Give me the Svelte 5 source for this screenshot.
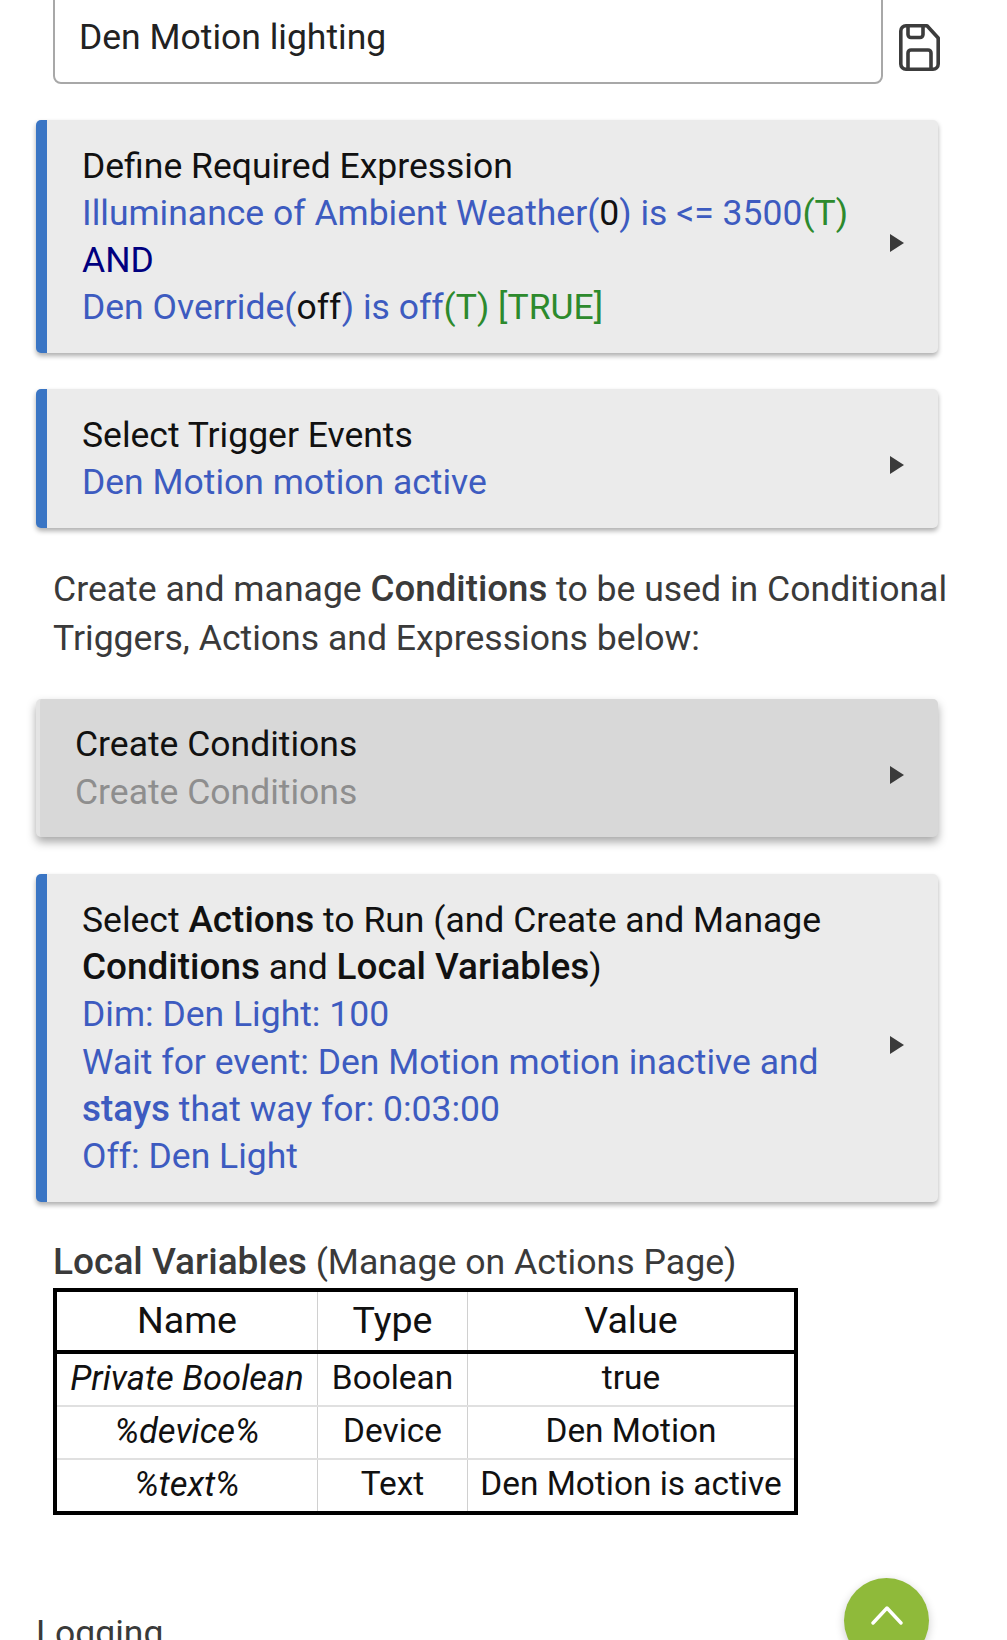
<script>
  const rows = [
    ['Private Boolean', 'Boolean', 'true'],
    ['%device%', 'Device', 'Den Motion'],
    ['%text%', 'Text', 'Den Motion is active']
  ];
</script>

<div class="page">
  <div class="name-row">
    <div class="name-input">Den Motion lighting</div>
    <svg class="save" viewBox="0 0 41 47" width="41" height="47" fill="none" stroke="#3c3c3c" stroke-width="3.6" stroke-linejoin="round">
      <path d="M7 1.8H28L39.2 14V40a5.2 5.2 0 0 1-5.2 5.2H7A5.2 5.2 0 0 1 1.800 40V7A5.2 5.2 0 0 1 7 1.8Z" />
      <path d="M9 1.800V10.500a3 3 0 0 0 3 3H21a3 3 0 0 0 3-3V1.800" />
      <path d="M9 45.200V29a3 3 0 0 1 3-3H29a3 3 0 0 1 3 3V45.200" />
    </svg>
  </div>

  <section class="card first">
    <div class="body">
      <div class="title">Define Required Expression</div>
      <div class="blue">Illuminance of Ambient Weather(<span class="black">0</span>) is &lt;= 3500<span class="green">(T)</span></div>
      <div class="navy">AND</div>
      <div class="blue">Den Override(<span class="black">off</span>) is off<span class="green">(T) [TRUE]</span></div>
    </div>
    <span class="arrow"></span>
  </section>

  <section class="card">
    <div class="body">
      <div class="title">Select Trigger Events</div>
      <div class="blue">Den Motion motion active</div>
    </div>
    <span class="arrow"></span>
  </section>

  <p class="intro">Create and manage <b>Conditions</b> to be used in Conditional Triggers, Actions and Expressions below:</p>

  <section class="card muted">
    <div class="body">
      <div class="title">Create Conditions</div>
      <div class="grey">Create Conditions</div>
    </div>
    <span class="arrow"></span>
  </section>

  <section class="card last">
    <div class="body">
      <div class="title">Select <b>Actions</b> to Run (and Create and Manage <b>Conditions</b> and <b>Local Variables</b>)</div>
      <div class="blue">Dim: Den Light: 100</div>
      <div class="blue">Wait for event: Den Motion motion inactive and <b>stays</b> that way for: 0:03:00</div>
      <div class="blue">Off: Den Light</div>
    </div>
    <span class="arrow"></span>
  </section>

  <div class="vars-title"><b>Local Variables</b> (Manage on Actions Page)</div>
  <table>
    <thead>
      <tr><th class="c1">Name</th><th class="c2">Type</th><th class="c3">Value</th></tr>
    </thead>
    <tbody>
      {#each rows as r}
        <tr><td class="c1 it">{r[0]}</td><td class="c2">{r[1]}</td><td class="c3">{r[2]}</td></tr>
      {/each}
    </tbody>
  </table>

  <div class="logging">Logging</div>

  <button class="top" aria-label="Back to top">
    <svg viewBox="0 0 32 20" width="32" height="20" fill="none" stroke="#fff" stroke-width="3.4" stroke-linecap="round" stroke-linejoin="round"><path d="M2 18 16 3 30 18" /></svg>
  </button>
</div>

<style>
  :global(body) { margin: 0; background: #fff; }
  .page {
    position: relative;
    width: 1007px;
    height: 1640px;
    overflow: hidden;
    font-family: Roboto, "Liberation Sans", sans-serif;
    font-size: 35.5px;
    line-height: 47.3px;
    color: #3a3a3a;
  }
  b { font-weight: 500; font-size: 1.04em; line-height: 1; }
  .name-row { display: flex; align-items: flex-end; margin: -20px 0 0 53px; height: 104px; }
  .name-input {
    box-sizing: border-box;
    width: 830px;
    height: 104px;
    border: 2px solid #a8a8a8;
    border-radius: 8px;
    padding: 32px 24px 0;
    color: #222;
  }
  .save { margin: 0 0 13px 16px; }
  .card {
    box-sizing: border-box;
    display: flex;
    align-items: center;
    width: 902px;
    margin: 36px 0 0 36px;
    padding: 22.500px 32px 21.500px 35px;
    background: #ebebeb;
    border-left: 11px solid #3a75c4;
    border-radius: 5px;
    box-shadow: 0 3px 5px rgba(0,0,0,.32);
    color: #111;
  }
  .card.last { margin-top: 37px; }
  .body { flex: 1; min-width: 0; padding-right: 36px; }
  .title { color: #111; }
  .title b { color: #111; }
  .blue { color: #3d5bc0; }
  .blue b { color: #3d5bc0; }
  .black { color: #111; }
  .green { color: #2d8a2d; }
  .navy { color: #00007f; }
  .grey { color: #8e8e8e; }
  .arrow {
    flex: none;
    width: 0; height: 0;
    margin: 12px 2px 0 0;
    border-left: 14px solid #3a3a3a;
    border-top: 9px solid transparent;
    border-bottom: 9px solid transparent;
  }
  .muted {
    background: #d8d8d8;
    border-left: 4px solid #e4e4e4;
    padding-left: 35px;
    box-shadow: 0 5px 10px rgba(0,0,0,.35);
  }
  .intro { margin: 37px 40px 0 53px; line-height: 49px; font-size: 35.6px; color: #3a3a3a; }
  .intro b { color: #3a3a3a; font-size: 1.03em; }
  .vars-title { margin: 37px 0 0 53px; line-height: 47px; font-size: 35.65px; }
  table {
    border-collapse: collapse;
    margin: 2px 0 0 53px;
    width: 745px;
    height: 227px;
    border: 4px solid #000;
    color: #111;
    table-layout: fixed;
    font-size: 33.4px;
  }
  th, td {
    text-align: center;
    font-weight: 400;
    padding: 0 0 3px;
    border-left: 1px solid #d0d0d0;
    border-bottom: 2px solid #e0e0e0;
    line-height: 40px;
  }
  th { border-bottom: 4px solid #000; height: 55px; font-size: 37.6px; }
  tbody tr:last-child td { border-bottom: none; }
  .c1 { width: 260px; border-left: none; }
  .c2 { width: 149px; }
  .it { font-style: italic; font-size: 34.5px; }
  .logging { position: absolute; left: 36px; top: 1610px; color: #3a3a3a; }
  .top {
    position: absolute;
    left: 844px;
    top: 1578px;
    width: 85px;
    height: 85px;
    padding: 0 0 12px;
    border: 0;
    border-radius: 50%;
    background: #8fba3a;
    box-shadow: 0 3px 10px rgba(0,0,0,.2);
    display: flex;
    align-items: center;
    justify-content: center;
  }
</style>
